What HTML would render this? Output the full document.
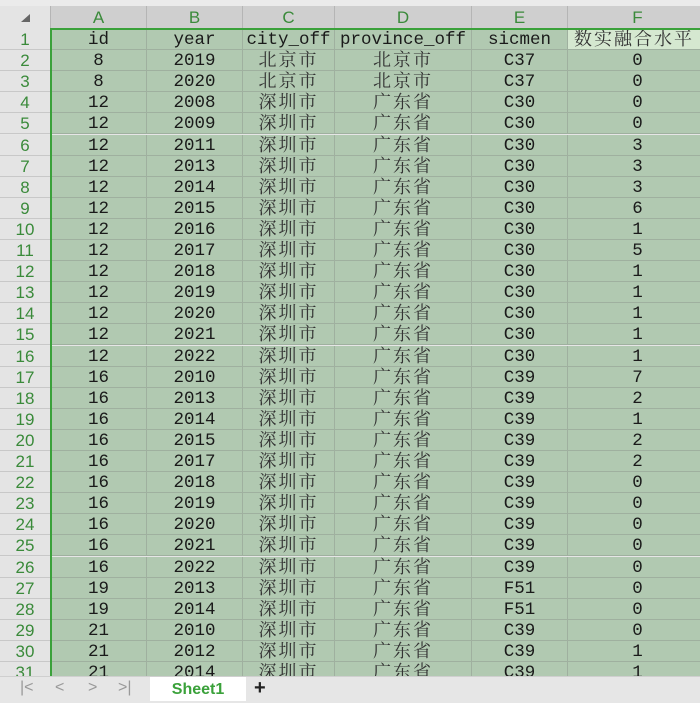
<!DOCTYPE html>
<html><head><meta charset="utf-8"><style>
body{margin:0;width:700px;height:700px;overflow:hidden;background:#e6e6e6;position:relative;font-family:"Liberation Mono","Noto Serif CJK SC",monospace;}
#top{position:absolute;left:0;top:0;width:700px;height:6px;background:#ebebeb}
#ch{position:absolute;top:6px;left:0;height:23px;width:700px;background:#cfcfcf;}
.c{position:absolute;top:0;height:23px;border-right:1px solid #b5b5b5;box-sizing:border-box;text-align:center;color:#3a8a3a;font:17px "Liberation Sans",sans-serif;line-height:24px}
#corner{position:absolute;left:0;top:6px;width:51px;height:23px;background:#e4e4e4;border-right:1px solid #b5b5b5;box-sizing:border-box}
#rows{position:absolute;left:0;top:29px;}
.r{position:absolute;left:0;width:700px;height:21.1px}
.rh{position:absolute;left:0;width:50px;height:100%;background:#e4e4e4;color:#3a8a3a;font:17px "Liberation Sans",sans-serif;text-align:center;line-height:21px;border-bottom:1px solid #c8c8c8;box-sizing:border-box}
.d{position:absolute;height:100%;background:#b1c9b1;border-right:1px solid #9fb09f;border-bottom:1px solid #9fb09f;box-sizing:border-box;text-align:center;font-size:17.5px;line-height:22px;color:#1a1a1a;white-space:nowrap;overflow:hidden}
.z{font-family:"Noto Serif CJK SC",serif;font-size:18px;letter-spacing:2px;color:#333;line-height:19px}
#sel{position:absolute;left:50px;top:28px;width:660px;height:660px;border-left:2px solid #3aa13a;border-top:2px solid #3aa13a;pointer-events:none}
#bot{position:absolute;left:0;top:676px;width:700px;height:24px;background:#e6e6e6;border-top:1px solid #cfcfcf}
.nav{position:absolute;top:2px;color:#999;font:16px "Liberation Sans",sans-serif}
#tab{position:absolute;left:150px;top:0;width:96px;height:24px;background:#fff;color:#3aa13a;font:bold 16px "Liberation Sans",sans-serif;text-align:center;line-height:26px}
</style></head><body>
<div id="top"></div>
<div id="ch">
<div class="c" style="left:51px;width:96px">A</div>
<div class="c" style="left:147px;width:96px">B</div>
<div class="c" style="left:243px;width:92px">C</div>
<div class="c" style="left:335px;width:137px">D</div>
<div class="c" style="left:472px;width:96px">E</div>
<div class="c" style="left:568px;width:140px">F</div>
</div>
<div id="corner"><div style="position:absolute;left:21px;top:8px;width:0;height:0;border-left:9px solid transparent;border-bottom:8px solid #666"></div></div>
<div id="rows"></div>
<div id="sel"></div>
<div id="bot">
<span class="nav" style="left:20px">|&lt;</span>
<span class="nav" style="left:55px">&lt;</span>
<span class="nav" style="left:88px">&gt;</span>
<span class="nav" style="left:118px">&gt;|</span>
<div id="tab">Sheet1</div>
<span style="position:absolute;left:254px;top:0;font:bold 20px 'Liberation Sans',sans-serif;color:#222">+</span>
</div>
<script>
var data=[["id","year","city_off","province_off","sicmen","数实融合水平"],
["8","2019","北京市","北京市","C37","0"],["8","2020","北京市","北京市","C37","0"],
["12","2008","深圳市","广东省","C30","0"],["12","2009","深圳市","广东省","C30","0"],
["12","2011","深圳市","广东省","C30","3"],["12","2013","深圳市","广东省","C30","3"],
["12","2014","深圳市","广东省","C30","3"],["12","2015","深圳市","广东省","C30","6"],
["12","2016","深圳市","广东省","C30","1"],["12","2017","深圳市","广东省","C30","5"],
["12","2018","深圳市","广东省","C30","1"],["12","2019","深圳市","广东省","C30","1"],
["12","2020","深圳市","广东省","C30","1"],["12","2021","深圳市","广东省","C30","1"],
["12","2022","深圳市","广东省","C30","1"],["16","2010","深圳市","广东省","C39","7"],
["16","2013","深圳市","广东省","C39","2"],["16","2014","深圳市","广东省","C39","1"],
["16","2015","深圳市","广东省","C39","2"],["16","2017","深圳市","广东省","C39","2"],
["16","2018","深圳市","广东省","C39","0"],["16","2019","深圳市","广东省","C39","0"],
["16","2020","深圳市","广东省","C39","0"],["16","2021","深圳市","广东省","C39","0"],
["16","2022","深圳市","广东省","C39","0"],["19","2013","深圳市","广东省","F51","0"],
["19","2014","深圳市","广东省","F51","0"],["21","2010","深圳市","广东省","C39","0"],
["21","2012","深圳市","广东省","C39","1"],["21","2014","深圳市","广东省","C39","1"]];
var cols=[[51,96],[147,96],[243,92],[335,137],[472,96],[568,140]];
var h="";
for(var i=0;i<data.length;i++){
 h+='<div class="r" style="top:'+(i*21.1)+'px"><div class="rh">'+(i+1)+'</div>';
 for(var j=0;j<6;j++){
  var st='left:'+cols[j][0]+'px;width:'+cols[j][1]+'px;';
  var cls='d';
  if(/[^\x00-\x7f]/.test(data[i][j]))cls+=' z';
  if(i==0&&j==5)st+='background:#d5e8d0;text-align:left;padding-left:6px;';
  h+='<div class="'+cls+'" style="'+st+'">'+data[i][j]+'</div>';
 }
 h+='</div>';
}
document.getElementById('rows').innerHTML=h;
</script>
</body></html>
